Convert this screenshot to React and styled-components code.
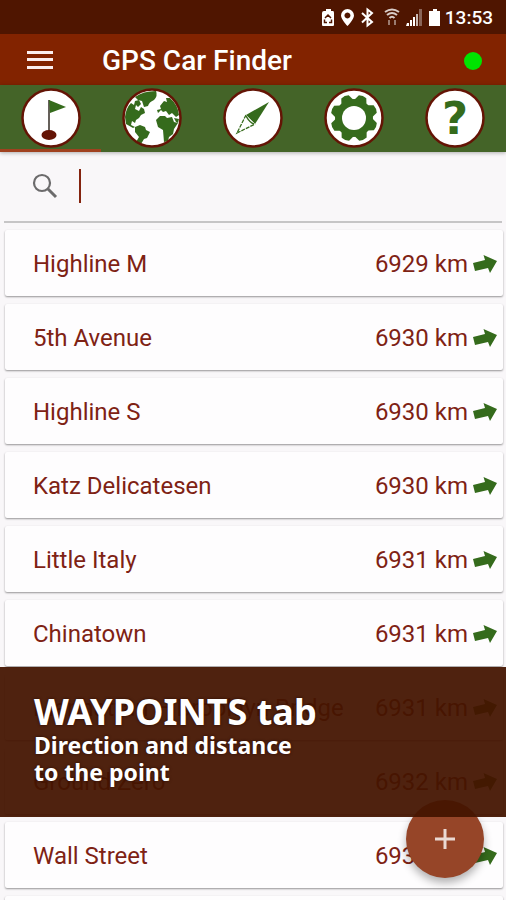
import styled, { createGlobalStyle } from 'styled-components'

const GlobalStyle = createGlobalStyle`
* {
    box-sizing: border-box;
}
body {
    margin: 0;
    background-color: #f9f7f9;
    font-family: Roboto, "Liberation Sans", sans-serif;
}
`

const Screen = styled.div`
position: relative;
display: flex;
flex-direction: column;
height: 100vh;
overflow: hidden;
`

const StatusBar = styled.div`
display: flex;
flex-shrink: 0;
align-items: center;
justify-content: flex-end;
height: 34px;
padding: 2px 13px 0 0;
background-color: #4f1500;
color: #ffffff;
`

const StatusIcons = styled.svg`
width: 122px;
height: 22px;
margin-right: 4px;
`

const Clock = styled.span`
font-size: 19px;
font-weight: 500;
line-height: 22px;
`

const AppBar = styled.header`
display: flex;
flex-shrink: 0;
align-items: center;
height: 51px;
padding: 2px 24px 0 26px;
background-color: #822300;
`

const MenuButton = styled.button`
display: flex;
padding: 0;
border: 0;
background: none;
cursor: pointer;
`

const Title = styled.h1`
flex-grow: 1;
margin: 0 0 0 48px;
color: #ffffff;
font-size: 28px;
font-weight: 500;
line-height: 32px;
`

const Signal = styled.span`
width: 18px;
height: 18px;
border-radius: 50%;
background-color: #00e400;
`

const Tabs = styled.nav`
display: flex;
flex-shrink: 0;
height: 67px;
background-color: #446428;
box-shadow: 0 1px 4px rgba(0, 0, 0, 0.3);
z-index: 1;
`

const Tab = styled.button`
display: flex;
flex: 1;
align-items: center;
justify-content: center;
padding: 2px 0 0;
border: 0;
border-bottom: 3px solid ${(props) => (props.$active ? "#a0411f" : "transparent")};
background: none;
cursor: pointer;
`

const TabIcon = styled.svg`
width: 60px;
height: 60px;
`

const SearchBar = styled.label`
display: flex;
flex-shrink: 0;
align-items: center;
height: 71px;
margin: 0 4px;
padding: 0 24px 2px 27px;
border-bottom: 2px solid #c6c5c6;
`

const SearchInput = styled.input`
flex: 1;
min-width: 0;
height: 34px;
margin-left: 18px;
padding: 0 8px;
border: 0;
border-left: 2px solid #84240f;
outline: 0;
background: none;
color: #6d1200;
font: inherit;
font-size: 24px;
`

const List = styled.ul`
display: flex;
flex-direction: column;
flex-shrink: 0;
gap: 8px;
margin: 0;
padding: 7px 3px 8px 5px;
list-style: none;
`

const Row = styled.li`
display: flex;
align-items: center;
height: 66px;
padding: 2px 5px 0 28px;
border-radius: 2px;
background-color: #fefdfe;
box-shadow: 0 1px 2px rgba(0, 0, 0, 0.4);
color: #7e2214;
font-size: 24px;
`

const Name = styled.span`
flex-grow: 1;
`

const Arrow = styled.svg`
width: 26px;
height: 22px;
margin-left: 4px;
`

const AddButton = styled.button`
position: absolute;
right: 22px;
bottom: 22px;
display: flex;
align-items: center;
justify-content: center;
width: 78px;
height: 78px;
padding: 0;
border: 0;
border-radius: 50%;
background-color: #964528;
box-shadow: 0 5px 9px rgba(0, 0, 0, 0.3);
cursor: pointer;
`

const Banner = styled.section`
position: absolute;
right: 0;
bottom: 83px;
left: 0;
height: 150px;
padding: 25px 34px;
background-color: rgba(68, 20, 0, 0.94);
color: #ffffff;
font-family: "Noto Sans", sans-serif;
font-weight: 800;
text-shadow: 0 0 3px #2a0a00;
`

const BannerTitle = styled.h2`
margin: 0;
font-size: 36px;
font-weight: 700;
line-height: 40px;
`

const BannerText = styled.p`
margin: 0;
font-size: 23px;
font-weight: 700;
line-height: 27px;
`

const waypoints = [
    { name: "Highline M", distance: "6929 km" },
    { name: "5th Avenue", distance: "6930 km" },
    { name: "Highline S", distance: "6930 km" },
    { name: "Katz Delicatesen", distance: "6930 km" },
    { name: "Little Italy", distance: "6931 km" },
    { name: "Chinatown", distance: "6931 km" },
    { name: "Manhattan – Brooklyn Bridge", distance: "6931 km" },
    { name: "Ground Zero", distance: "6932 km" },
    { name: "Wall Street", distance: "6932 km" },
]

const teeth = [22, 67, 112, 157, 202, 247, 292, 337]

const FlagIcon = () => (
    <>
        <path d="M27 12 H29 V46 H27 Z" fill="#66605a" />
        <path d="M28 12 L45 19 L29 25 Z" fill="#356b1c" />
        <ellipse cx="28" cy="47" rx="7.500" ry="5" fill="#641405" />
    </>
)

const GlobeIcon = () => (
    <g fill="#356b1c">
        <path d="M13 9 Q21 3 34 3 Q36 8 32 12 Q27 14 26 18 L22 19 L20 13 L16 12 Z" />
        <path d="M3 29 Q4 20 9 15 L12 17 L13 13 L17 12 L19 16 L16 19 L14 17 L13 21 L17 23 L19 19 L22 21 L23 25 L19 27 L17 30 L14 32 L13 35 L10 33 L9 37 L13 39 L11 40 L4 36 Z" />
        <path d="M13 39 L18 37 L23 39 L24 42 L28 44 L25 50 L22 51 L19 56 L14 54 L17 49 L13 44 Z" />
        <path d="M38 18 L42 13 L45 14 L44 10 L48 10 Q56 17 57 27 L54 29 L50 25 L47 27 L44 23 L41 24 L39 22 L36 25 L35 22 L39 21 Z" />
        <path d="M34 32 L38 28 L43 28 L45 30 L50 29 L52 34 L56 35 L52 41 L51 46 L47 49 L46 53 L42 54 L41 42 L36 39 Z" />
        <path d="M52 30 L57 31 L56 35 L54 34 Z" />
    </g>
)

const CompassIcon = () => (
    <>
        <path d="M46 14 L32 36 L23 27 Z" fill="#356b1c" />
        <path d="M23 27 L14 45 L32 36" fill="#ffffff" stroke="#356b1c" strokeWidth="1.300" strokeDasharray="4 1" />
        <path d="M23 28 Q27 35 31 36" fill="none" stroke="#356b1c" strokeWidth="1.500" />
    </>
)

const GearIcon = () => (
    <g fill="#356b1c">
        {teeth.map((angle) => (
            <path key={angle} d="M23.500 13 L26 7 Q30 5.500 34 7 L36.500 13 Z" transform={`rotate(${angle} 30 30)`} />
        ))}
        <circle cx="30" cy="30" r="19" />
        <circle cx="30" cy="30" r="12" fill="#ffffff" />
    </g>
)

const HelpIcon = () => (
    <text x="30" y="46" textAnchor="middle" fontFamily="DejaVu Sans" fontWeight="700" fontSize="45" fill="#356b1c">?</text>
)

const tabs = [
    { label: "Waypoints", Icon: FlagIcon },
    { label: "Map", Icon: GlobeIcon },
    { label: "Compass", Icon: CompassIcon },
    { label: "Settings", Icon: GearIcon },
    { label: "Help", Icon: HelpIcon },
]

const App = () => {
    return (
        <Screen>
            <GlobalStyle />
            <StatusBar>
                <StatusIcons viewBox="0 0 122 22" fill="#ffffff" aria-hidden="true">
                    <path d="M5 4 H7 V2 H12 V4 H14 Q15 4 15 6 V18 Q15 19 14 19 H4 Q3 19 3 18 V6 Q3 4 5 4 Z" />
                    <path d="M6 11 L9 8 L12 11 M5.500 12.500 V15.500 H8 M12.500 12.500 V15.500 H10" fill="none" stroke="#4f1500" strokeWidth="1.500" />
                    <path fillRule="evenodd" d="M28.500 2 A6.500 6.500 0 0 0 22 8.500 C22 12.500 28.500 19 28.500 19 S35 12.500 35 8.500 A6.500 6.500 0 0 0 28.500 2 Z M28.500 5.500 A3 3 0 1 1 28.400 5.500 Z" />
                    <path d="M43 6 L53 15 L48.500 18.500 V2.500 L53 6 L43 15.500" fill="none" stroke="#ffffff" strokeWidth="2" />
                    <g fill="none" stroke="#d9cdc8" strokeWidth="2">
                        <path d="M66 5 Q73 0 80 5 M68 8 Q73 4 78 8 M70.500 11 Q73 8.500 75.500 11" />
                        <path d="M70 13 V18 M76 13 V18" stroke="#9a7b70" />
                    </g>
                    <path d="M88 16 H90 V19 H87 Z M91 13 H93 V19 H91 Z M94 10 H96 V19 H94 Z" />
                    <path d="M97 7 H99 V19 H97 Z" fill="#c9b9b3" />
                    <path d="M100 2 H103 V19 H100 Z" fill="#8a6558" />
                    <path d="M112 4 H114 V2 H118 V4 H121 V19 H110 V4 Z" />
                </StatusIcons>
                <Clock>13:53</Clock>
            </StatusBar>
            <AppBar>
                <MenuButton aria-label="Menu">
                    <svg width="28" height="22" viewBox="0 0 28 22" fill="#fbeeee">
                        <path d="M1 1 H27 V4 H1 Z M1 8 H27 V11 H1 Z M1 16 H27 V19 H1 Z" />
                    </svg>
                </MenuButton>
                <Title>GPS Car Finder</Title>
                <Signal />
            </AppBar>
            <Tabs>
                {tabs.map(({ label, Icon }, index) => (
                    <Tab key={label} $active={index === 0} aria-label={label}>
                        <TabIcon viewBox="0 0 60 60">
                            <circle cx="30" cy="30" r="28.500" fill="#ffffff" />
                            <Icon />
                            <circle cx="30" cy="30" r="28.500" fill="none" stroke="#641405" strokeWidth="2.500" />
                        </TabIcon>
                    </Tab>
                ))}
            </Tabs>
            <SearchBar>
                <svg width="30" height="30" viewBox="0 0 30 30" fill="none" stroke="#6c6b6c" aria-hidden="true">
                    <circle cx="11" cy="12" r="8" strokeWidth="2.200" />
                    <path d="M17 18 L25 26" strokeWidth="3" />
                </svg>
                <SearchInput type="text" aria-label="Search" />
            </SearchBar>
            <List>
                {waypoints.map((item) => (
                    <Row key={item.name}>
                        <Name>{item.name}</Name>
                        <span>{item.distance}</span>
                        <Arrow viewBox="0 0 26 22" aria-hidden="true">
                            <path d="M1 10 L13 7 L11.500 2 L25 8 L18 20 L16 15 L3 18 Z" fill="#356b1c" />
                        </Arrow>
                    </Row>
                ))}
                <Row aria-hidden="true" />
            </List>
            <AddButton aria-label="Add waypoint">
                <svg width="20" height="20" viewBox="0 0 20 20" stroke="#ead9d3" strokeWidth="3">
                    <path d="M10 0 V20 M0 10 H20" />
                </svg>
            </AddButton>
            <Banner>
                <BannerTitle>WAYPOINTS tab</BannerTitle>
                <BannerText>
                    Direction and distance
                    <br />
                    to the point
                </BannerText>
            </Banner>
        </Screen>
    )
}

export default App
